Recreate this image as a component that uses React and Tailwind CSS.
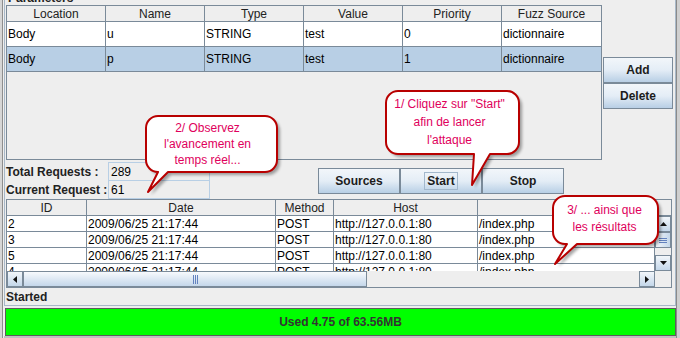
import React from 'react';

const params = [
  { loc: 'Body', name: 'u', type: 'STRING', value: 'test', prio: '0', src: 'dictionnaire', sel: false },
  { loc: 'Body', name: 'p', type: 'STRING', value: 'test', prio: '1', src: 'dictionnaire', sel: true },
];

const pCols = [
  { label: 'Location', key: 'loc', w: 'w-[99px]' },
  { label: 'Name', key: 'name', w: 'w-[99px]' },
  { label: 'Type', key: 'type', w: 'w-[99px]' },
  { label: 'Value', key: 'value', w: 'w-[99px]' },
  { label: 'Priority', key: 'prio', w: 'w-[99px]' },
  { label: 'Fuzz Source', key: 'src', w: 'w-[99px]', last: true },
];

const rCols = [
  { label: 'ID', w: 'w-[80px]' },
  { label: 'Date', w: 'w-[189px]' },
  { label: 'Method', w: 'w-[58px]' },
  { label: 'Host', w: 'w-[144px]' },
  { label: '', w: 'w-[177px]' },
];

const requests = ['2', '3', '5', '4'].map(id => [id, '2009/06/25 21:17:44', 'POST', 'http://127.0.0.1:80', '/index.php']);

const btn = 'flex items-center justify-center border border-[#7a8a99] bg-linear-to-b from-[#f2f6fa] via-[#e4edf6] to-[#b8cfe5] font-bold text-[#1c1c1c]';
const sbBtn = 'flex items-center justify-center border border-[#7a8a99] bg-linear-to-b from-[#f2f6fa] to-[#c4d7ea]';

const Arrow = ({ dir }) => {
  const pts = {
    up: '0,4 3.5,0 7,4',
    down: '0,0 3.5,4 7,0',
    left: '4,0 0,3.5 4,7',
    right: '0,0 4,3.5 0,7',
  }[dir];
  const vert = dir === 'up' || dir === 'down';
  return (
    <svg width={vert ? 7 : 4} height={vert ? 4 : 7}>
      <polygon points={pts} fill="#111" />
    </svg>
  );
};

const Callout = ({ id, x, y, w, h, tail, lines, lh, top, shift }) => {
  const r = 12;
  const [b1, b2, tx, ty] = tail;
  const d = `M ${r + 1} 1 H ${w - 1 - r} A ${r} ${r} 0 0 1 ${w - 1} ${r + 1} V ${h - 1 - r} A ${r} ${r} 0 0 1 ${w - 1 - r} ${h - 1} H ${b2} L ${tx} ${ty} L ${b1} ${h - 1} H ${r + 1} A ${r} ${r} 0 0 1 1 ${h - 1 - r} V ${r + 1} A ${r} ${r} 0 0 1 ${r + 1} 1 Z`;
  return (
    <div className="absolute" style={{ left: x, top: y, width: w, height: h }}>
      <svg className="absolute left-0 top-0 overflow-visible" width={w + 8} height={ty + 8}>
        <defs>
          <filter id={id} x="-20%" y="-20%" width="140%" height="140%">
            <feGaussianBlur stdDeviation="1.6" />
          </filter>
        </defs>
        <path d={d} transform="translate(3,3)" fill="#000" opacity="0.35" filter={`url(#${id})`} />
        <path d={d} fill="#fff" stroke="#b80000" strokeWidth="2" strokeLinejoin="round" />
      </svg>
      <div className="absolute left-0 text-center text-[12px] text-[#e0005c]" style={{ top, width: w - shift * 2 }}>
        {lines.map(l => (
          <div key={l} style={{ lineHeight: `${lh}px` }}>{l}</div>
        ))}
      </div>
    </div>
  );
};

export default function App() {
  return (
    <div className="relative flex w-[680px] h-[338px] overflow-hidden bg-[#eeeeee] text-[12px] text-black font-['Liberation_Sans',Arial,sans-serif]">
      {/* left window frame */}
      <div className="w-[4px] h-full flex bg-[#d6d6d6]">
        <div className="ml-[2px] w-px h-full bg-[#8e8e8e]" />
        <div className="w-px h-full bg-[#eeeeee]" />
      </div>

      <div className="w-[672px] h-full flex flex-col">
        {/* main panel */}
        <div className="h-[306px] border-x border-b border-[#a8b8c8] flex flex-col">
          <div className="h-[5px] overflow-hidden">
            <div className="-mt-[9px] ml-[3px] font-bold text-[#222] leading-[14px]">Parameters</div>
          </div>

          {/* parameters table + add/delete */}
          <div className="flex items-start">
            <div className="ml-px w-[596px] h-[155px] border border-[#7a8a99] flex flex-col">
              <div className="flex h-[16px] border-b border-[#7a8a99] bg-[#eeeeee]">
                {pCols.map(c => (
                  <div key={c.label} className={`${c.w} ${c.last ? '' : 'border-r border-[#7a8a99]'} flex items-center justify-center leading-none text-[#222]`}>{c.label}</div>
                ))}
              </div>
              {params.map((p, i) => (
                <div key={i} className={`flex h-[25px] border-b border-[#7a8a99] ${p.sel ? 'bg-[#b8cfe5]' : 'bg-white'}`}>
                  {pCols.map(c => (
                    <div key={c.key} className={`${c.w} ${c.last ? '' : 'border-r border-[#7a8a99]'} flex items-center pl-px leading-none`}>{p[c.key]}</div>
                  ))}
                </div>
              ))}
            </div>
            <div className="ml-px mt-[52px] w-[70px] flex flex-col">
              <div className={`${btn} h-[26px]`}>Add</div>
              <div className={`${btn} h-[26px]`}>Delete</div>
            </div>
          </div>

          {/* stats + action buttons */}
          <div className="h-[39px] flex items-start">
            <div className="ml-px mt-[2px] flex">
              <div className="w-[102px] flex flex-col font-bold text-[#222]">
                <div className="h-[19px] flex items-center">Total Requests :</div>
                <div className="h-[18px] flex items-center">Current Request :</div>
              </div>
              <div className="w-[102px] flex flex-col">
                <div className="h-[19px] border border-[#b8cfe5] flex items-center pl-[2px]">289</div>
                <div className="h-[18px] border border-t-0 border-[#b8cfe5] flex items-center pl-[2px]">61</div>
              </div>
            </div>
            <div className="ml-[108px] mt-[8px] flex">
              <div className={`${btn} w-[82px] h-[26px]`}>Sources</div>
              <div className={`${btn} w-[82px] h-[26px]`}>
                <span className="border border-[#a3b8cc] px-[2px] leading-[16px]">Start</span>
              </div>
              <div className={`${btn} w-[82px] h-[26px]`}>Stop</div>
            </div>
          </div>

          {/* requests table */}
          <div className="ml-px w-[666px] h-[89px] border border-[#7a8a99] flex flex-col">
            <div className="flex h-[16px] border-b border-[#7a8a99] bg-[#eeeeee]">
              {rCols.map((c, i) => (
                <div key={i} className={`${c.w} border-r border-[#7a8a99] flex items-center justify-center leading-none text-[#222]`}>{c.label}</div>
              ))}
              <div className="w-[15px]" />
            </div>
            <div className="flex h-[55px]">
              <div className="w-[648px] h-[55px] overflow-hidden bg-white">
                {requests.map((r, i) => (
                  <div key={i} className="flex h-[16px] border-b border-[#7a8a99]">
                    {r.map((v, j) => (
                      <div key={j} className={`${rCols[j].w} border-r border-[#7a8a99] flex items-center pl-px leading-none`}>{v}</div>
                    ))}
                  </div>
                ))}
              </div>
              <div className="w-[16px] h-[55px] flex flex-col bg-[#eeeeee]">
                <div className={`${sbBtn} h-[16px]`}><Arrow dir="up" /></div>
                <div className="h-[16px] border border-[#7a8a99] bg-linear-to-r from-[#f2f6fa] to-[#c4d7ea] flex flex-col items-center justify-center gap-px">
                  <div className="w-[8px] h-px bg-[#6382bf]" />
                  <div className="w-[8px] h-px bg-[#6382bf]" />
                  <div className="w-[8px] h-px bg-[#6382bf]" />
                </div>
                <div className="flex-1" />
                <div className={`${sbBtn} h-[16px]`}><Arrow dir="down" /></div>
              </div>
            </div>
            <div className="flex h-[16px]">
              <div className="w-[648px] flex bg-[#eeeeee]">
                <div className={`${sbBtn} w-[16px]`}><Arrow dir="left" /></div>
                <div className="w-[344px] border border-[#7a8a99] bg-linear-to-b from-[#f7fafd] to-[#c4d7ea] flex items-center justify-center gap-px">
                  <div className="w-px h-[9px] bg-[#6382bf]" />
                  <div className="w-px h-[9px] bg-[#6382bf]" />
                  <div className="w-px h-[9px] bg-[#6382bf]" />
                </div>
                <div className="flex-1" />
                <div className={`${sbBtn} w-[16px]`}><Arrow dir="right" /></div>
              </div>
              <div className="w-[16px] bg-[#eeeeee]" />
            </div>
          </div>

          <div className="h-[17px] ml-px flex items-center font-bold text-[#222]">Started</div>
        </div>

        <div className="h-[2px]" />
        {/* memory bar */}
        <div className="ml-px w-[671px] h-[28px] border border-[#5c5c5c] bg-[#00ff00] flex items-center justify-center font-bold text-[#333]">
          Used 4.75 of 63.56MB
        </div>
        <div className="flex-1 bg-[#c0c0c0]" />
      </div>

      {/* right window frame */}
      <div className="w-[4px] h-full flex bg-[#cfcfcf]">
        <div className="w-px h-full bg-[#8a8a8a]" />
      </div>

      <Callout id="c1" x={385} y={90} w={135} h={65} tail={[89, 105, 87, 95]} lines={['1/ Cliquez sur "Start"', 'afin de lancer', "l'attaque"]} lh={18} top={5} shift={3} />
      <Callout id="c2" x={145} y={115} w={133} h={58} tail={[13, 23, 3, 77]} lines={['2/ Observez', "l'avancement en", 'temps réel...']} lh={16} top={5} shift={4} />
      <Callout id="c3" x={552} y={195} w={107} h={50} tail={[15, 25, 3, 69]} lines={['3/ ... ainsi que', 'les résultats']} lh={17} top={7} shift={1} />
    </div>
  );
}
